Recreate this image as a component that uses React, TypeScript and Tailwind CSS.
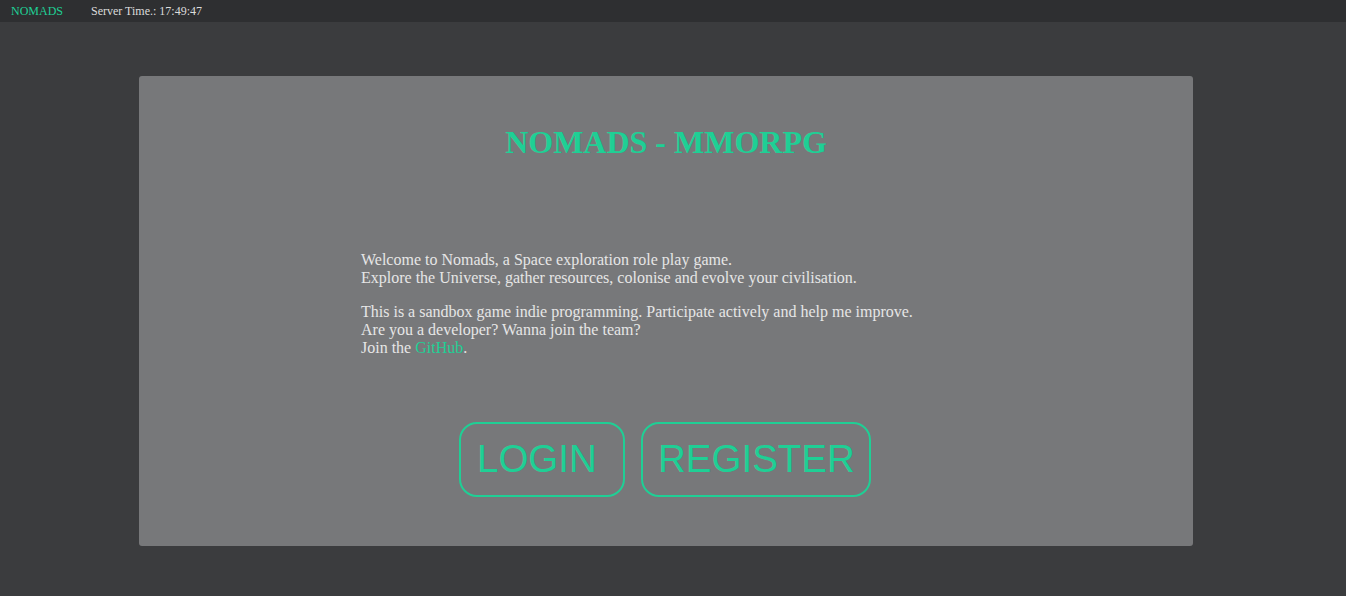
import React, { useState } from 'react';

const App = () => {
  const [time] = useState('17:49:47');

  return (
    <div className="min-h-screen bg-[#3b3c3e] font-['Liberation_Serif',serif]">
      {/* Top bar */}
      <div className="h-[22px] bg-[#2e2f31] flex items-center text-[12px] leading-none">
        <span className="ml-[11px] text-[#1fcf95]">NOMADS</span>
        <span className="ml-[28px] text-[#dcdcdc]">Server Time.: {time}</span>
      </div>

      {/* Card */}
      <div className="mx-[139px] mt-[54px] w-[1054px] h-[470px] bg-[#77787a] rounded-[3px] pt-[48px]">
        <h1 className="text-center text-[32px] leading-[37px] font-bold text-[#1fcf95]">
          NOMADS - MMORPG
        </h1>

        <div className="w-[610px] mx-auto mt-[90px] text-[16px] leading-[18px] text-[#e6e6e6]">
          <p>
            Welcome to Nomads, a Space exploration role play game.
            <br />
            Explore the Universe, gather resources, colonise and evolve your civilisation.
          </p>
          <p className="mt-[16px]">
            This is a sandbox game indie programming. Participate actively and help me improve.
            <br />
            Are you a developer? Wanna join the team?
            <br />
            Join the <a className="text-[#1fcf95]">GitHub</a>.
          </p>
        </div>

        {/* Buttons */}
        <div className="mt-[65px] pr-[2px] flex justify-center gap-[16px] font-['Liberation_Sans',sans-serif]">
          <button className="w-[166px] h-[75px] pl-[16px] text-left border-2 border-[#1fcf95] rounded-[18px] text-[38.5px] leading-none text-[#1fcf95]">
            LOGIN
          </button>
          <button className="w-[230px] h-[75px] pl-[15px] text-left border-2 border-[#1fcf95] rounded-[18px] text-[38.5px] leading-none text-[#1fcf95]">
            REGISTER
          </button>
        </div>
      </div>
    </div>
  );
};

export default App;
